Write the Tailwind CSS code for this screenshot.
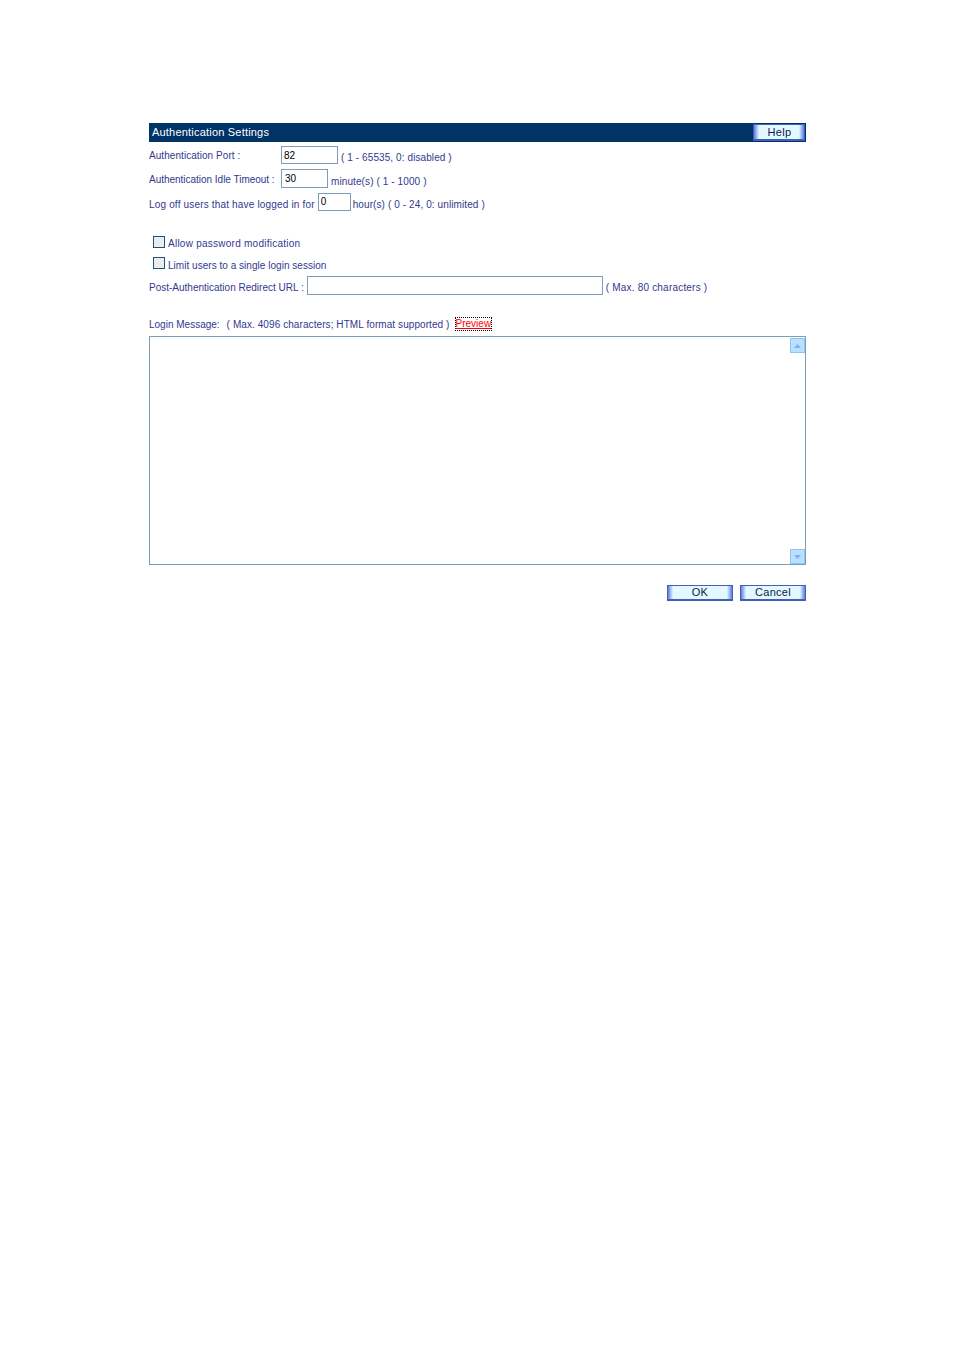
<!DOCTYPE html>
<html>
<head>
<meta charset="utf-8">
<title>Authentication Settings</title>
<script src="https://cdn.jsdelivr.net/npm/@tailwindcss/browser@4"></script>
</head>
<body class="bg-white">
<div class="w-[954px] h-[1350px] pt-[123px] pl-[149px] font-['Liberation_Sans',Arial,sans-serif] text-[10px] text-[#33388f] whitespace-nowrap">
  <div class="w-[657px]">
    <!-- title bar -->
    <div class="flex items-center justify-between h-[19px] bg-[#003366] pl-[3px] pr-[1px] text-white text-[11px] tracking-[0.2px]">
      <span>Authentication Settings</span>
      <button class="w-[52px] h-[17px] pl-[1px] flex items-center justify-center bg-[linear-gradient(to_right,#5f7fd8,#c8dcff_4px,#e4f9ff_5px,#e4f9ff_calc(100%-5px),#c8dcff_calc(100%-4px),#5f7fd8)] border border-[#3f5fb8] border-b-2 text-[#0a1a50] font-medium text-[11px] leading-none tracking-[0.3px]">Help</button>
    </div>

    <div class="flex items-center h-[18px] mt-[4px]">
      <span class="w-[132px] tracking-[0.06px]">Authentication Port :</span>
      <input class="w-[57px] h-[18px] border border-[#7f9db9] pl-[2px] text-[10px] text-black outline-none" value="82">
      <span class="ml-[3px] pt-[5px] tracking-[0.09px]">( 1 - 65535, 0: disabled )</span>
    </div>
    <div class="flex items-center h-[19px] mt-[5px]">
      <span class="w-[132px] pt-[1px] tracking-[-0.02px]">Authentication Idle Timeout :</span>
      <input class="w-[47px] h-[19px] border border-[#7f9db9] pl-[3px] text-[10px] text-black outline-none" value="30">
      <span class="ml-[3px] pt-[5px] tracking-[0.1px]">minute(s) ( 1 - 1000 )</span>
    </div>
    <div class="flex items-center h-[18px] mt-[5px]">
      <span class="mr-[3px] pt-[4px] tracking-[0.17px]">Log off users that have logged in for</span>
      <input class="w-[33px] h-[18px] border border-[#7f9db9] pl-[2px] pb-[2px] text-[10px] text-black outline-none" value="0">
      <span class="ml-[2px] pt-[4px] tracking-[0.1px]">hour(s) ( 0 - 24, 0: unlimited )</span>
    </div>

    <div class="flex items-center h-[14px] mt-[24px] pl-[4px]">
      <span class="w-[12px] h-[12px] border border-[#1c5180] bg-[#ececec]"></span>
      <span class="ml-[3px] pt-[2px] tracking-[0.25px]">Allow password modification</span>
    </div>
    <div class="flex items-center h-[14px] mt-[7px] pl-[4px]">
      <span class="w-[12px] h-[12px] border border-[#1c5180] bg-[#ececec]"></span>
      <span class="ml-[3px] pt-[5px] tracking-[0.03px]">Limit users to a single login session</span>
    </div>
    <div class="flex items-center h-[19px] mt-[6px]">
      <span class="mr-[3px] pt-[3px]">Post-Authentication Redirect URL :</span>
      <input class="w-[296px] h-[19px] border border-[#7f9db9] outline-none">
      <span class="ml-[3px] pt-[3px] tracking-[0.2px]">( Max. 80 characters )</span>
    </div>

    <div class="flex items-center h-[14px] mt-[22px]">
      <span>Login Message:</span>
      <span class="ml-[7px] tracking-[0.08px]">( Max. 4096 characters; HTML format supported )</span>
      <a class="ml-[5px] h-[14px] leading-[12px] border border-dotted border-black text-[#ff0000] underline">Preview</a>
    </div>

    <!-- message box -->
    <div class="flex flex-col justify-between items-end h-[229px] mt-[5px] border border-[#7f9db9] pt-[1px]">
      <span class="flex items-center justify-center w-[15px] h-[15px] bg-[#b9e0ff] border border-[#8ec4f5]">
        <svg width="7" height="4" viewBox="0 0 7 4"><path d="M3.5 0 7 4H0z" fill="#7fb2e8"/></svg>
      </span>
      <span class="flex items-center justify-center w-[15px] h-[15px] bg-[#b9e0ff] border border-[#8ec4f5]">
        <svg width="7" height="4" viewBox="0 0 7 4"><path d="M0 0h7L3.5 4z" fill="#7fb2e8"/></svg>
      </span>
    </div>

    <div class="flex justify-end gap-[7px] mt-[20px]">
      <button class="w-[66px] h-[16px] flex items-center justify-center bg-[linear-gradient(to_right,#5f7fd8,#c8dcff_4px,#e4f9ff_5px,#e4f9ff_calc(100%-5px),#c8dcff_calc(100%-4px),#5f7fd8)] border border-[#3f5fb8] border-b-2 text-[#0a1a50] text-[11px] leading-none tracking-[0.3px]">OK</button>
      <button class="w-[66px] h-[16px] flex items-center justify-center bg-[linear-gradient(to_right,#5f7fd8,#c8dcff_4px,#e4f9ff_5px,#e4f9ff_calc(100%-5px),#c8dcff_calc(100%-4px),#5f7fd8)] border border-[#3f5fb8] border-b-2 text-[#0a1a50] text-[11px] leading-none tracking-[0.3px]">Cancel</button>
    </div>
  </div>
</div>
</body>
</html>
